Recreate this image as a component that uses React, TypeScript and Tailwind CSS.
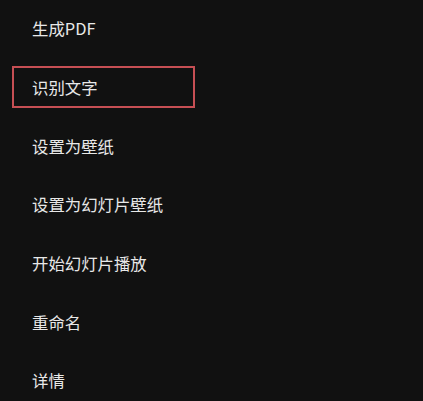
import React from "react";

const items = [
  "生成PDF",
  "识别文字",
  "设置为壁纸",
  "设置为幻灯片壁纸",
  "开始幻灯片播放",
  "重命名",
  "详情",
];

const App: React.FC = () => {
  return (
    <div
      className="w-[423px] h-[401px] bg-[#111111] overflow-hidden"
      style={{ fontFamily: '"Noto Sans CJK SC", "Noto Sans", sans-serif' }}
    >
      <div className="flex flex-col -mt-[1px]">
        {items.map((label, i) => (
          <div key={label} className="h-[58.7px] flex items-center pl-3">
            <div
              className={
                i === 1
                  ? "w-[183px] h-[42px] flex items-center pl-[18px] border-2 border-[#c64f54]"
                  : "w-[183px] h-[42px] flex items-center pl-[18px] border-2 border-transparent"
              }
            >
              <span className="text-[16.4px] text-[#e8e8e8] leading-none">{label}</span>
            </div>
          </div>
        ))}
      </div>
    </div>
  );
};

export default App;
